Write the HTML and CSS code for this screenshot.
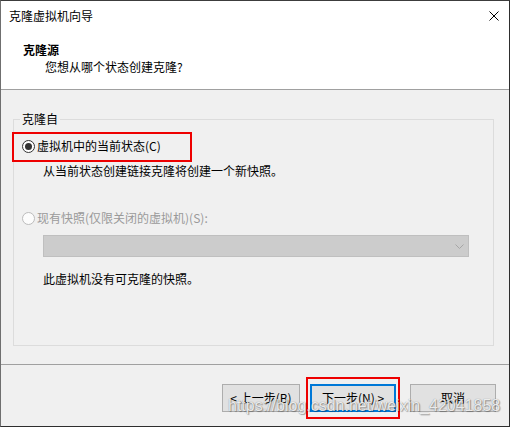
FILE: index.html
```html
<!DOCTYPE html>
<html lang="zh-CN">
<head>
<meta charset="utf-8">
<title>克隆虚拟机向导</title>
<link rel="stylesheet" href="styles.css">
</head>
<body>
<div class="window">
  <div class="top">
    <div class="titlebar">
      <span class="title">克隆虚拟机向导</span>
      <svg class="close" width="10" height="10" viewBox="0 0 10 10"><path d="M0.5 0.5 L9.5 9.5 M9.5 0.5 L0.5 9.5" stroke="#000" stroke-width="1" fill="none"/></svg>
    </div>
    <div class="header">
      <div class="h-title">克隆源</div>
      <div class="h-sub">您想从哪个状态创建克隆?</div>
    </div>
  </div>
  <div class="content">
    <fieldset class="group">
      <legend class="legend">克隆自</legend>
      <div class="radio-row">
        <span class="radio checked"></span>
        <span class="radio-label">虚拟机中的当前状态(C)</span>
        <span class="mark mark-radio"></span>
      </div>
      <div class="desc">从当前状态创建链接克隆将创建一个新快照。</div>
      <div class="radio-row disabled second">
        <span class="radio"></span>
        <span class="radio-label">现有快照(仅限关闭的虚拟机)(S):</span>
      </div>
      <div class="combo">
        <svg class="chev" width="9" height="5" viewBox="0 0 9 5"><path d="M0.5 0.5 L4.5 4.5 L8.5 0.5" stroke="#a6a6a6" stroke-width="1" fill="none"/></svg>
      </div>
      <div class="note">此虚拟机没有可克隆的快照。</div>
    </fieldset>
  </div>
  <div class="footer">
    <div class="btn btn-back">&lt; 上一步(B)</div>
    <div class="btn btn-next">下一步(N) &gt;<span class="mark mark-next"></span></div>
    <div class="btn btn-cancel">取消</div>
  </div>
  <div class="watermark">https://blog.csdn.net/weixin_42041858</div>
</div>
</body>
</html>
```

FILE: styles.css
```css
html, body {
  margin: 0;
  padding: 0;
  background: #f0f0f0;
}
body {
  font-family: "Noto Sans CJK SC", "Microsoft YaHei", sans-serif;
  font-size: 12px;
  color: #000;
}
.window {
  position: relative;
  width: 510px;
  height: 427px;
  box-sizing: border-box;
  border-left: 1px solid #6f6f6f;
  border-top: 1px solid #3c3c3c;
  border-right: 1px solid #2e2e2e;
  border-bottom: 1px solid #2e2e2e;
  background: #f0f0f0;
  display: flex;
  flex-direction: column;
  overflow: hidden;
}
.top {
  background: #fff;
  border-bottom: 1px solid #a0a0a0;
}
.titlebar {
  height: 30px;
  display: flex;
  align-items: center;
  justify-content: space-between;
  padding: 0 10px 0 8px;
  line-height: 16px;
}
.close {
  display: block;
}
.header {
  height: 58px;
  box-sizing: border-box;
  padding-top: 11px;
}
.h-title {
  font-weight: bold;
  line-height: 16px;
  padding-left: 22px;
}
.h-sub {
  line-height: 17px;
  padding-left: 44px;
}
.content {
  padding: 21px 15px 18px 12px;
}
.group {
  margin: 0;
  border: 1px solid #dcdcdc;
  padding: 0 8px 58px 8px;
  min-width: 0;
}
.legend {
  padding: 0 2px;
  margin-left: -2px;
  line-height: 16px;
}
.radio-row {
  position: relative;
  display: flex;
  align-items: center;
  gap: 2px;
  margin-top: 11px;
  line-height: 16px;
}
.radio-row.second {
  margin-top: 31px;
}
.radio {
  width: 13px;
  height: 13px;
  box-sizing: border-box;
  border: 1px solid #333;
  border-radius: 50%;
  background: #fff;
  display: flex;
  align-items: center;
  justify-content: center;
}
.radio.checked::after {
  content: "";
  width: 7px;
  height: 7px;
  border-radius: 50%;
  background: #333;
}
.disabled .radio {
  border-color: #bcbcbc;
  background: #fcfcfc;
}
.disabled .radio-label {
  color: #9a9a9a;
}
.desc {
  margin: 9px 0 0 21px;
  line-height: 16px;
}
.combo {
  margin: 9px 0 0 21px;
  width: 426px;
  height: 22px;
  box-sizing: border-box;
  background: #cccccc;
  border: 1px solid #bfbfbf;
  display: flex;
  align-items: center;
  justify-content: flex-end;
  padding-right: 4px;
}
.chev {
  display: block;
}
.note {
  margin: 14px 0 0 21px;
  line-height: 16px;
}
.footer {
  flex: 1;
  border-top: 1px solid #a0a0a0;
  display: flex;
  justify-content: flex-end;
  align-items: flex-start;
  padding: 19px 13px 0 0;
}
.btn {
  position: relative;
  height: 28px;
  box-sizing: border-box;
  background: #e1e1e1;
  border: 1px solid #adadad;
  display: flex;
  align-items: center;
  justify-content: center;
  line-height: 16px;
}
.btn-back {
  width: 78px;
}
.btn-next {
  width: 86px;
  margin-left: 10px;
  border: 2px solid #0078d7;
}
.btn-cancel {
  width: 86px;
  margin-left: 14px;
}
.mark {
  position: absolute;
  box-sizing: border-box;
  border: 2px solid #ee0000;
}
.mark-radio {
  left: -10px;
  top: -6px;
  width: 180px;
  height: 30px;
}
.mark-next {
  left: -6px;
  top: -9px;
  right: -6px;
  bottom: -9px;
}
.watermark {
  position: absolute;
  left: 227px;
  top: 396px;
  font-family: "Liberation Sans", Arial, sans-serif;
  font-size: 16px;
  line-height: 18px;
  color: rgba(255, 255, 255, 0.85);
  text-shadow: 0 0 1px rgba(0, 0, 0, 0.45), 1px 1px 1px rgba(0, 0, 0, 0.3);
  white-space: nowrap;
  pointer-events: none;
}
```
